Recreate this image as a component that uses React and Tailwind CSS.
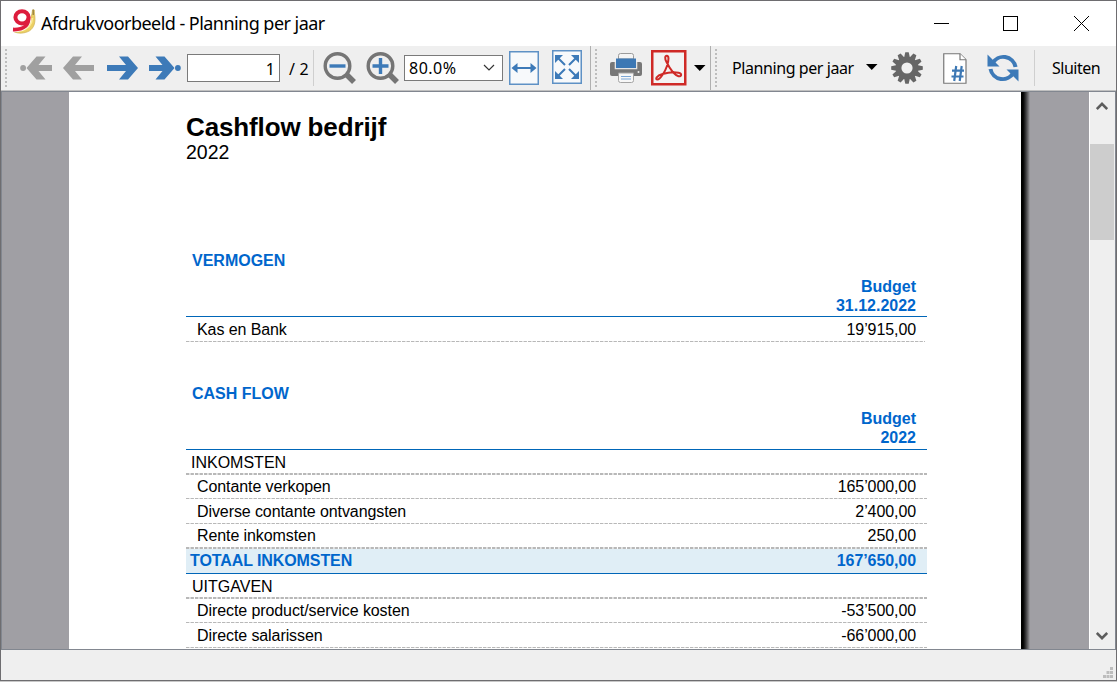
import React from "react";

const UI = "font-['Noto_Sans',sans-serif]";

function Arrow({ color, flip, dot }) {
  return (
    <svg width={dot ? 32 : 31} height="24" viewBox={dot ? "0 0 32 24" : "0 0 31 24"} className="shrink-0">
      <g transform={flip ? `translate(${dot ? 32 : 31} 0) scale(-1 1)` : undefined}>
        {dot ? (
          <>
            <path d="M0 9h13.500L6.500 .5h9L25.500 12l-10 11.500h-9L13.500 15H0z" fill={color} />
            <circle cx="28.900" cy="12" r="2.900" fill={color} />
          </>
        ) : (
          <path d="M0 9h19L12 .5h9L31 12 21 23.500h-9L19 15H0z" fill={color} />
        )}
      </g>
    </svg>
  );
}

function Grip({ className }) {
  return (
    <svg width="3" height="38" viewBox="0 0 3 38" className={`shrink-0 ${className}`}>
      {Array.from({ length: 10 }, (_, i) => (
        <rect key={i} x="0" y={i * 4} width="2" height="2" fill="#bdbdbd" />
      ))}
    </svg>
  );
}

function Magnifier({ plus }) {
  return (
    <svg width="34" height="34" viewBox="0 0 34 34" className="shrink-0">
      <path d="M22.500 22.500l8.500 8.500" stroke="#757575" strokeWidth="5.500" />
      <circle cx="14.500" cy="15" r="12.300" fill="#efefef" stroke="#757575" strokeWidth="3.400" />
      <path d={plus ? "M6.500 15h16M14.500 7v16" : "M6.500 15h16"} stroke="#3d7ab8" strokeWidth="3.400" />
    </svg>
  );
}

function Caret() {
  return (
    <svg width="12" height="6" viewBox="0 0 12 6" className="block shrink-0">
      <path d="M0 0h11.500L5.750 6z" fill="#000" />
    </svg>
  );
}

function Logo() {
  return (
    <svg width="26" height="27" viewBox="0 0 26 27" className="shrink-0">
      <path d="M21.500 1h1.800c0 2 .2 4 .5 6 .8 7-1 12-5.300 14.800C14 24.500 7 25 2.500 22.500 9 22 14 20 17 14.500c2.500-4 4-8.500 4.500-13.500z" fill="#ecd065" stroke="#cdb052" strokeWidth=".7" />
      <path d="M21.500 9c-.5 6.500-4 11-12 13" fill="none" stroke="#fbeb9a" strokeWidth="1.600" />
      <path d="M21.500 .5h1.500v5.500h-1.500z" fill="#a08a45" />
      <path d="M17.500 8.500c.7 7.200-4.500 12.500-15.500 12" fill="none" stroke="#fff" strokeWidth="5" />
      <ellipse cx="11" cy="8.300" rx="6.600" ry="6.100" fill="#fff" stroke="#dd1c3c" strokeWidth="4" />
      <path d="M17.500 8.500c.7 7.200-4.500 12.500-15.500 12" fill="none" stroke="#dd1c3c" strokeWidth="3.800" />
    </svg>
  );
}

function FitWidth() {
  return (
    <svg width="30" height="34" viewBox="0 0 30 34" className="shrink-0">
      <rect x=".75" y=".75" width="28.500" height="32.500" fill="#f7f9fb" stroke="#5e91c5" strokeWidth="1.500" />
      <path d="M6 17h18" stroke="#3d7ab8" strokeWidth="2" />
      <path d="M2.500 17l6-5v10zM27.500 17l-6-5v10z" fill="#3d7ab8" />
    </svg>
  );
}

function FitPage() {
  return (
    <svg width="30" height="34" viewBox="0 0 30 34" className="shrink-0">
      <rect x=".75" y=".75" width="28.500" height="32.500" fill="#f7f9fb" stroke="#5e91c5" strokeWidth="1.500" />
      <path d="M5.500 7.500l7.500 7.500M24.500 7.500l-7.500 7.500M5.500 26.500l7.500-7.500M24.500 26.500l-7.500-7.500" stroke="#3d7ab8" strokeWidth="2" />
      <path d="M3 5h8l-8 8zM27 5h-8l8 8zM3 29h8l-8-8zM27 29h-8l8-8z" fill="#3d7ab8" />
    </svg>
  );
}

function Printer() {
  return (
    <svg width="32" height="30" viewBox="0 0 32 30" className="shrink-0">
      <path d="M8.500 6V2.500a2 2 0 0 1 2-2h11a2 2 0 0 1 2 2V6z" fill="#f4f4f4" stroke="#9b9b9b" />
      <path d="M2 9h28a2 2 0 0 1 2 2v10a2 2 0 0 1-2 2H2a2 2 0 0 1-2-2V11a2 2 0 0 1 2-2z" fill="#777" />
      <path d="M5.500 9v6.500h21V9" fill="none" stroke="#e5e5e5" strokeWidth="1.600" />
      <path d="M6 5.500h20v9.500H6z" fill="#3d78b4" />
      <path d="M8.500 20h15v7.500a2 2 0 0 1-2 2h-11a2 2 0 0 1-2-2z" fill="#f7f7f7" stroke="#a4a4a4" />
      <path d="M11 23.500h10M11 26h10" stroke="#7ba6d5" strokeWidth="1.100" />
      <circle cx="28.500" cy="19" r="1" fill="#eee" />
    </svg>
  );
}

function Pdf() {
  return (
    <svg width="36" height="36" viewBox="0 0 36 36" className="shrink-0">
      <rect x="1.250" y="1.250" width="33" height="33" fill="#f3f3f3" stroke="#cf2a27" strokeWidth="2.500" />
      <path d="M15.500 12C13.500 8.500 14 5.800 15.800 5.800c2.200 0 2.200 4 .2 10.200C14 22 9 29.500 6.500 29.500c-2.800 0-1-3.800 5-5.500 6-1.700 12-2 16-1.300 4 .8 3 4.300 0 3.500C22 24.500 17.500 16 15.500 12z" fill="none" stroke="#cf2a27" strokeWidth="2" strokeLinejoin="round" />
    </svg>
  );
}

function Gear() {
  return (
    <svg width="32" height="32" viewBox="-16 -16 32 32" className="shrink-0">
      {Array.from({ length: 12 }, (_, i) => (
        <path key={i} d="M-3 -10L-1.700 -15.800H1.700L3 -10z" fill="#666" transform={`rotate(${i * 30})`} />
      ))}
      <circle r="8.400" fill="none" stroke="#666" strokeWidth="5.600" />
    </svg>
  );
}

function HashPage() {
  return (
    <svg width="24" height="31" viewBox="0 0 24 31" className="shrink-0">
      <path d="M.75.75H17l6 6v23.500H.75z" fill="#fff" stroke="#777" strokeWidth="1.200" />
      <path d="M17 .75v6h6" fill="#fff" stroke="#777" strokeWidth="1.200" />
      <path d="M13.200 13l-2 15M18.700 13l-2 15M9 17.700h12M8.500 23.500h12" stroke="#3d78b4" strokeWidth="2.200" fill="none" />
    </svg>
  );
}

function Refresh() {
  return (
    <svg width="32" height="30" viewBox="0 0 32 30" className="shrink-0">
      <path d="M5.500 10.500A12.300 12.300 0 0 1 28.500 14" fill="none" stroke="#3d7ab8" strokeWidth="4" />
      <path d="M.5 1.500v12h12z" fill="#3d7ab8" />
      <path d="M26.500 19.500A12.300 12.300 0 0 1 3.500 16" fill="none" stroke="#3d7ab8" strokeWidth="4" />
      <path d="M31.500 28.500v-12h-12z" fill="#3d7ab8" />
    </svg>
  );
}

function Dash({ h = 1, w = 741 }) {
  return (
    <svg width={w} height={h} className="block shrink-0">
      <path d={`M0 ${h / 2}H${w}`} stroke="#b8b8b8" strokeWidth={h} strokeDasharray="3.400 1.100" />
    </svg>
  );
}

function Row({ label, value, className = "", labelClass = "pl-[11px]" }) {
  return (
    <div className={`flex shrink-0 justify-between whitespace-nowrap pr-[11px] text-[16px] tracking-[-0.090px] ${className}`}>
      <span className={labelClass}>{label}</span>
      <span>{value}</span>
    </div>
  );
}

function ColumnHead({ year, className }) {
  return (
    <div className={`shrink-0 pr-[11px] text-right text-[16px] font-bold leading-[19px] text-[#0066cc] ${className}`}>
      Budget
      <br />
      {year}
    </div>
  );
}

function Rule() {
  return <div className="h-px shrink-0 bg-[#0066b8]" />;
}

function Chevron({ up }) {
  return (
    <svg width="12" height="10" viewBox="0 0 12 10" className="block">
      <path d={up ? "M.8 8L6 2.800 11.200 8" : "M.8 2L6 7.200 11.200 2"} fill="none" stroke="#5c5c5c" strokeWidth="2.600" />
    </svg>
  );
}

export default function App() {
  return (
    <div className={`flex h-[682px] w-[1117px] flex-col overflow-hidden bg-[#c8c8c8] text-black ${UI}`}>
      <div className="flex h-[681px] flex-col border border-[#6e6d70]">
        <header className="flex h-[45px] shrink-0 items-center bg-white">
          <div className="flex flex-1 items-center gap-[4px] pb-[2px] pl-[10px]">
            <Logo />
            <span className="whitespace-nowrap text-[18px] leading-[24px] tracking-[-0.540px]">Afdrukvoorbeeld - Planning per jaar</span>
          </div>
          <svg width="184" height="20" viewBox="0 0 184 20" fill="none" stroke="#000">
            <path d="M2 9.500h15" />
            <rect x="71.500" y="2.500" width="14" height="14" />
            <path d="M142 2l15 15M157 2l-15 15" />
          </svg>
        </header>

        <div className="flex h-[45px] shrink-0 items-center border-b border-[#c0c0c0] bg-[#efefef]">
          <Grip className="ml-[4px]" />
          <div className="ml-[12px] flex items-center">
            <Arrow color="#a0a0a0" flip dot />
            <div className="ml-[11px] flex"><Arrow color="#a0a0a0" flip /></div>
            <div className="ml-[13px] flex"><Arrow color="#3d7ab8" /></div>
            <div className="ml-[11px] flex"><Arrow color="#3d7ab8" dot /></div>
          </div>
          <div className="ml-[6px] flex h-[28px] w-[93px] shrink-0 items-center justify-end border border-[#7a7a7a] bg-white pr-[4px] pt-[2px] text-[16px]">1</div>
          <span className="ml-[9px] w-[24px] shrink-0 whitespace-nowrap pt-[2px] text-[16px] tracking-[0.200px]">/ 2</span>
          <div className="h-[36px] w-px shrink-0 bg-[#cfcfcf]" />
          <div className="ml-[9px] flex items-center gap-[9px]">
            <Magnifier />
            <Magnifier plus />
          </div>
          <div className="ml-[4px] flex h-[26px] w-[99px] shrink-0 items-center justify-between border border-[#7a7a7a] bg-white pb-px pl-[4px] pr-[7px] text-[16px] tracking-[0.500px]">
            <span>80.0%</span>
            <svg width="12" height="8" viewBox="0 0 12 8"><path d="M1 1l5 5 5-5" fill="none" stroke="#333" strokeWidth="1.200" /></svg>
          </div>
          <div className="ml-[6px] flex items-center gap-[13px]">
            <FitWidth />
            <div className="flex pb-[2px]"><FitPage /></div>
          </div>
          <div className="ml-[8px] h-[44px] w-px shrink-0 bg-[#b0b0b0]" />
          <Grip className="ml-[4px]" />
          <div className="ml-[12px] flex items-center gap-[9px]">
            <Printer />
            <Pdf />
          </div>
          <div className="ml-[7px]"><Caret /></div>
          <div className="ml-[4px] h-[44px] w-px shrink-0 bg-[#b0b0b0]" />
          <Grip className="ml-[4px]" />
          <span className="ml-[14px] w-[134px] shrink-0 whitespace-nowrap text-[16px] tracking-[-0.420px]">Planning per jaar</span>
          <div className="pb-[2px]"><Caret /></div>
          <div className="ml-[13px] flex items-center">
            <Gear />
            <div className="ml-[20px] flex"><HashPage /></div>
            <div className="ml-[20px] flex"><Refresh /></div>
          </div>
          <div className="ml-[15px] h-[36px] w-px shrink-0 bg-[#cfcfcf]" />
          <span className="ml-[17px] whitespace-nowrap text-[16px] tracking-[-0.500px]">Sluiten</span>
        </div>

        <main className="flex h-[559px] shrink-0 border border-[#828790] bg-[#a09fa4] font-['Liberation_Sans',sans-serif]">
          <article className="ml-[67px] h-[557px] w-[952px] shrink-0 overflow-hidden bg-white pl-[117px]">
            <div className="flex w-[741px] flex-col">
              <h1 className="h-[48px] shrink-0 whitespace-nowrap pt-[19px] text-[26px] font-bold leading-[32px] tracking-[-0.130px]">Cashflow bedrijf</h1>
              <p className="h-[110px] shrink-0 text-[19.500px] leading-[24px]">2022</p>

              <h2 className="h-[27px] shrink-0 pl-[6px] pt-px text-[16px] font-bold leading-[20px] text-[#0066cc]">VERMOGEN</h2>
              <ColumnHead year="31.12.2022" className="h-[39px]" />
              <Rule />
              <Row label="Kas en Bank" value="19’915,00" className="h-[24px] leading-[26px]" />
              <Dash w={739} />

              <h2 className="mt-[41px] h-[26px] shrink-0 pl-[6px] pt-px text-[16px] font-bold leading-[20px] text-[#0066cc]">CASH FLOW</h2>
              <ColumnHead year="2022" className="h-[40px]" />
              <Rule />
              <Row label="INKOMSTEN" value="" className="h-[23px] leading-[26px]" labelClass="pl-[5px] tracking-normal" />
              <Dash h={2} />
              <Row label="Contante verkopen" value="165’000,00" className="h-[23px] leading-[23px]" />
              <Dash />
              <Row label="Diverse contante ontvangsten" value="2’400,00" className="h-[24px] leading-[26px]" />
              <Dash />
              <Row label="Rente inkomsten" value="250,00" className="h-[23px] leading-[23px]" />
              <Dash h={2} />
              <Row label="TOTAAL INKOMSTEN" value="167’650,00" className="h-[24px] bg-[#e0eef6] font-bold leading-[24px] text-[#0066cc]" labelClass="pl-[4px]" />
              <Rule />
              <Row label="UITGAVEN" value="" className="h-[23px] leading-[26px]" labelClass="pl-[6px] tracking-normal" />
              <Dash h={2} />
              <Row label="Directe product/service kosten" value="-53’500,00" className="h-[23px] leading-[23px]" />
              <Dash />
              <Row label="Directe salarissen" value="-66’000,00" className="h-[24px] leading-[26px]" />
              <Dash />
            </div>
          </article>
          <div className="w-[9px] shrink-0 bg-linear-to-r from-black from-10% to-[#a09fa4]" />
          <div className="flex-1" />
          <div className="flex w-[26px] shrink-0 flex-col items-center border-l border-white bg-[#efefef]">
            <div className="mr-px flex h-[52px] shrink-0 items-center pb-[24px]"><Chevron up /></div>
            <div className="mr-px h-[96px] w-[24px] shrink-0 bg-[#cdcdcd]" />
            <div className="flex-1" />
            <div className="mr-px pb-[8px]"><Chevron /></div>
          </div>
        </main>
        <footer className="flex h-[30px] shrink-0 items-end justify-end bg-[#efefef] pb-[2px] pr-[3px]">
          <svg width="10" height="11" viewBox="0 0 10 11" fill="#bdbdbd">
            <path d="M7 0h3v3H7zM3.500 4h3v3h-3zM7 4h3v3H7zM0 8h3v3H0zM3.500 8h3v3h-3zM7 8h3v3H7z" />
          </svg>
        </footer>
      </div>
    </div>
  );
}
